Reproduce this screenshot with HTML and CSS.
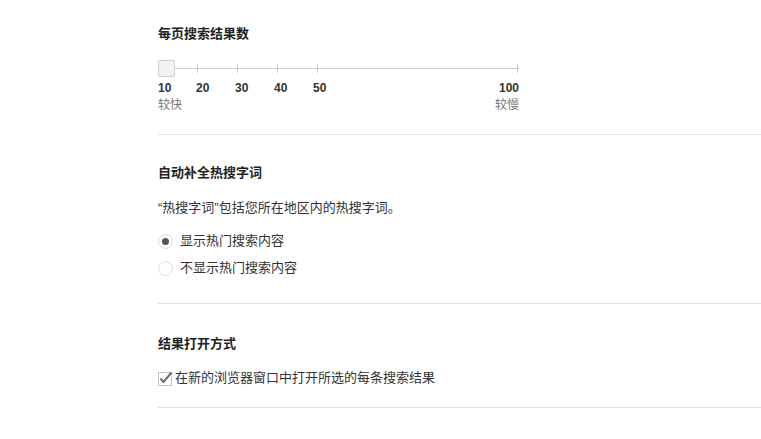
FILE: index.html
```html
<!DOCTYPE html>
<html lang="zh-CN">
<head>
    <meta charset="UTF-8">
    <meta name="viewport" content="width=device-width, initial-scale=1.0" />
    <title>搜索设置</title>
    <link rel="stylesheet" href="styles.css">
</head>
<body>
  <div class="settings">

    <div class="section first">
      <h2>每页搜索结果数</h2>
      <div class="slider">
        <div class="track"></div>
        <span class="tick" style="left: 39px"></span>
        <span class="tick" style="left: 79px"></span>
        <span class="tick" style="left: 119px"></span>
        <span class="tick" style="left: 159px"></span>
        <span class="tick" style="left: 359px"></span>
        <div class="handle"></div>
      </div>
      <div class="numbers">
        <span style="left: 0px">10</span>
        <span style="left: 38px">20</span>
        <span style="left: 77px">30</span>
        <span style="left: 116px">40</span>
        <span style="left: 155px">50</span>
        <span class="last">100</span>
      </div>
      <div class="speed">
        <span>较快</span>
        <span>较慢</span>
      </div>
    </div>

    <div class="section second">
      <h2>自动补全热搜字词</h2>
      <p class="desc">“热搜字词”包括您所在地区内的热搜字词。</p>
      <label class="radio checked"><span class="circle"></span>显示热门搜索内容</label>
      <label class="radio"><span class="circle"></span>不显示热门搜索内容</label>
    </div>

    <div class="section third">
      <h2>结果打开方式</h2>
      <label class="check">
        <svg width="15" height="15" viewBox="0 0 15 15">
          <rect x="0.5" y="1.5" width="13" height="13" fill="#fff" stroke="#c4c4c4"/>
          <polyline points="2.5,7.5 5.5,11 13.5,1.5" fill="none" stroke="#6b6b6b" stroke-width="2"/>
        </svg>
        在新的浏览器窗口中打开所选的每条搜索结果
      </label>
    </div>

  </div>
</body>
</html>
```

FILE: styles.css
```css
body {
  margin: 0;
  padding: 0;
  background-color: #fff;
  font-family: "Liberation Sans", Arial, "Noto Sans CJK SC", sans-serif;
  color: #222;
}
.settings {
  padding-left: 158px;
}
.section {
  border-bottom: 1px solid #e0e0e0;
}
.section h2 {
  margin: 0;
  font-size: 13px;
  font-weight: bold;
  line-height: 20px;
  color: #222;
}
.first {
  padding-top: 24px;
  padding-bottom: 22px;
}
.second {
  padding-top: 28px;
  padding-bottom: 25px;
}
.third {
  padding-top: 30px;
  padding-bottom: 19px;
}

/* slider */
.slider {
  position: relative;
  width: 361px;
  height: 17px;
  margin-top: 16px;
}
.track {
  position: absolute;
  left: 0;
  right: 0;
  top: 8px;
  height: 1px;
  background-color: #ccc;
}
.tick {
  position: absolute;
  top: 4px;
  width: 1px;
  height: 9px;
  background-color: #ccc;
}
.handle {
  position: absolute;
  left: 0;
  top: 0;
  width: 15px;
  height: 15px;
  border: 1px solid #cfcfcf;
  border-radius: 2px;
  background-color: #f2f2f2;
}
.numbers {
  position: relative;
  width: 361px;
  height: 14px;
  margin-top: 4px;
  font-size: 12px;
  font-weight: bold;
  line-height: 14px;
  color: #333;
}
.numbers span {
  position: absolute;
  top: 0;
}
.numbers .last {
  right: 0;
}
.speed {
  display: flex;
  justify-content: space-between;
  width: 361px;
  margin-top: 3px;
  font-size: 12px;
  line-height: 14px;
  color: #777;
}

/* radios */
.desc {
  margin: 15px 0 0;
  font-size: 13px;
  line-height: 20px;
  color: #333;
}
.radio {
  display: flex;
  align-items: center;
  margin-top: 7px;
  font-size: 13px;
  line-height: 20px;
  color: #333;
}
.desc + .radio {
  margin-top: 13px;
}
.circle {
  box-sizing: border-box;
  width: 15px;
  height: 15px;
  margin-right: 7px;
  border: 1px solid #ddd;
  border-radius: 50%;
  background-color: #fff;
  display: flex;
  align-items: center;
  justify-content: center;
}
.checked .circle::after {
  content: "";
  width: 7px;
  height: 7px;
  border-radius: 50%;
  background-color: #555;
}

/* checkbox */
.check {
  display: flex;
  align-items: center;
  margin-top: 14px;
  font-size: 13px;
  line-height: 20px;
  color: #333;
}
.check svg {
  margin-right: 2px;
}
```
